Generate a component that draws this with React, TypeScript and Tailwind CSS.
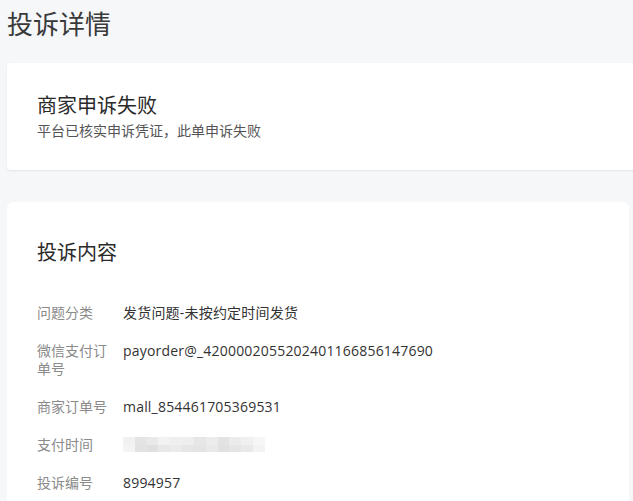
const rows: { label: string; value: string | null }[] = [
  { label: '问题分类', value: '发货问题-未按约定时间发货' },
  { label: '微信支付订单号', value: 'payorder@_4200002055202401166856147690' },
  { label: '商家订单号', value: 'mall_854461705369531' },
  { label: '支付时间', value: null },
  { label: '投诉编号', value: '8994957' },
]

// mosaic used to hide the pay time
const mosaic = [
  '#f1f1f1', '#e4e4e4', '#e9e9e9', '#f2f2f2', '#efefef', '#eeeeee', '#e6e6e6', '#ececec', '#e3e3e3', '#ebebeb', '#f0f0f0', '#f6f6f6',
  '#f4f4f4', '#e2e2e2', '#e0e0e0', '#e8e8e8', '#ebebeb', '#e6e6e6', '#e4e4e4', '#e9e9e9', '#e1e1e1', '#e5e5e5', '#e9e9e9', '#f3f3f3',
]

function Blurred() {
  return (
    <div className="grid grid-cols-12 w-[142px] h-[15px] mt-[1px] blur-[0.6px]">
      {mosaic.map((c, i) => (
        <div key={i} style={{ backgroundColor: c }} />
      ))}
    </div>
  )
}

export default function App() {
  return (
    <div
      className="w-[633px] h-[501px] overflow-hidden bg-[#f6f7f9] pl-[7px] pt-[7px]"
      style={{ fontFamily: '"Open Sans", "Noto Sans CJK SC", sans-serif' }}
    >
      <h1 className="text-[26px] leading-[34px] text-[#3a3a3a] font-normal">投诉详情</h1>

      {/* Result */}
      <div className="mt-[22px] w-[640px] bg-white rounded-[4px] shadow-[0_1px_2px_rgba(0,0,0,0.08)] px-[30px] pt-[30px] pb-[30px]">
        <div className="text-[20px] leading-[26px] text-[#2a2a2a]">商家申诉失败</div>
        <div className="mt-[3px] text-[14px] leading-[18px] text-[#555]">平台已核实申诉凭证，此单申诉失败</div>
      </div>

      {/* Content */}
      <div className="mt-[32px] w-[622px] bg-white rounded-[6px] px-[30px] pt-[38px] pb-[40px]">
        <div className="text-[20px] leading-[26px] text-[#2a2a2a]">投诉内容</div>
        <div className="mt-[38px] flex flex-col gap-[20px]">
          {rows.map(r => (
            <div key={r.label} className="flex gap-[10px] text-[14px] leading-[18px]">
              <div className="w-[76px] shrink-0 text-[#8a8a8a]">{r.label}</div>
              <div className="text-[#333] tracking-[0.2px]">{r.value ?? <Blurred />}</div>
            </div>
          ))}
        </div>
      </div>
    </div>
  )
}
